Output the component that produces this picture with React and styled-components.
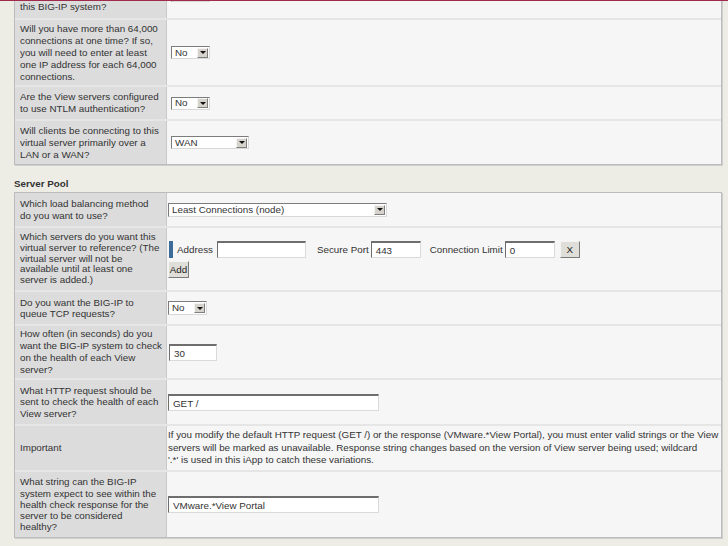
import React from 'react';
import styled, { createGlobalStyle } from 'styled-components';

const GlobalStyle = createGlobalStyle`
  html, body {
    margin: 0;
    padding: 0;
    background: #eeede5;
  }
  body {
    font-family: "Liberation Sans", Arial, sans-serif;
    font-size: 9.8px;
    color: #333;
  }
`;

const Page = styled.div`
  width: 728px;
  height: 546px;
  overflow: hidden;
  background: #eeede5;
`;

const TopRule = styled.div`
  height: 1px;
  background: #9e2a4c;
  position: relative;
  z-index: 2;
`;

const Clip = styled.div`
  overflow: hidden;
  padding: 0 4px 2px 14px;
`;

const Table = styled.div`
  width: 706px;
  margin-top: ${(p) => p.$shift || 0}px;
  border: 1px solid #bcbcbc;
  box-shadow: 1px 1px 0 #cfcfcf;
  background: #f6f6f6;
`;

const Row = styled.div`
  display: grid;
  grid-template-columns: 152px 1fr;
  min-height: ${(p) => p.$h}px;
  border-top: ${(p) => (p.$first ? 'none' : '2px solid #e6e6e6')};
  box-sizing: border-box;
`;

const Label = styled.div`
  background: #dcdcdc;
  border-right: 1px solid #c9c9c9;
  padding: 0 2px 0 5px;
  display: flex;
  align-items: center;
  white-space: nowrap;
  line-height: ${(p) => p.$lh || 12}px;
`;

const Value = styled.div`
  display: flex;
  flex-direction: column;
  justify-content: center;
  align-items: flex-start;
  padding-left: ${(p) => p.$pad ?? 1}px;
  padding-right: 2px;
`;

const Note = styled.div`
  line-height: 12.6px;
  white-space: nowrap;
`;

const Heading = styled.div`
  font-weight: bold;
  padding: 11px 0 3px 14px;
  line-height: 11px;
`;

const Select = styled.div`
  display: inline-flex;
  align-items: center;
  box-sizing: border-box;
  width: ${(p) => p.$w}px;
  height: ${(p) => p.$hgt || 14}px;
  background: #fff;
  border: 1px solid;
  border-color: #7c7c7c #d8d8d8 #d8d8d8 #7c7c7c;
  padding-left: 3px;
  padding-right: 1px;
  line-height: 1;
`;

const SelectText = styled.span`
  flex: 1;
`;

const Arrow = styled.span`
  width: 11px;
  height: 10px;
  box-sizing: border-box;
  background: #d6d3cc;
  border: 1px solid;
  border-color: #f4f4f4 #7e7e7e #7e7e7e #f4f4f4;
  display: flex;
  align-items: center;
  justify-content: center;
  &::after {
    content: '';
    border-left: 3px solid transparent;
    border-right: 3px solid transparent;
    border-top: 3px solid #111;
  }
`;

const Input = styled.div`
  box-sizing: border-box;
  width: ${(p) => p.$w}px;
  height: 17px;
  background: #fff;
  border: 1px solid;
  border-color: #6e6e6e #dadada #dadada #6e6e6e;
  border-top-width: 2px;
  padding: 3px 0 0 4px;
  line-height: 10px;
`;

const Button = styled.div`
  box-sizing: border-box;
  width: ${(p) => p.$w}px;
  height: 17px;
  margin-top: ${(p) => p.$top || 0}px;
  background: #e0ded8;
  border: 1px solid;
  border-color: #f4f4f4 #7a7a7a #7a7a7a #f4f4f4;
  display: flex;
  align-items: center;
  justify-content: center;
  color: #222;
`;

const MemberLine = styled.div`
  display: flex;
  align-items: center;
  height: 17px;
`;

const Marker = styled.span`
  width: 4px;
  height: 17px;
  background: #3d6c98;
  margin: 0 4px 0 1px;
`;

const Caption = styled.span`
  margin-right: ${(p) => p.$gap ?? 2}px;
`;

const Spacer = styled.span`
  width: ${(p) => p.$w}px;
`;

const Dropdown = ({ value, w, h }) => (
  <Select $w={w} $hgt={h}>
    <SelectText>{value}</SelectText>
    <Arrow />
  </Select>
);

const App = () => (
  <Page>
    <GlobalStyle />
    <TopRule />
    <Clip>
      <Table $shift={-30}>
        <Row $h={46} $first>
          <Label>
            <div>
              What IP address do you want to
              <br />
              use for the virtual server on
              <br />
              this BIG-IP system?
            </div>
          </Label>
          <Value $pad={4}>
            <Dropdown value="" w={39} h={13} />
          </Value>
        </Row>
        <Row $h={67}>
          <Label>
            <div>
              Will you have more than 64,000
              <br />
              connections at one time? If so,
              <br />
              you will need to enter at least
              <br />
              one IP address for each 64,000
              <br />
              connections.
            </div>
          </Label>
          <Value $pad={4}>
            <Dropdown value="No" w={39} h={13} />
          </Value>
        </Row>
        <Row $h={34}>
          <Label>
            <div>
              Are the View servers configured
              <br />
              to use NTLM authentication?
            </div>
          </Label>
          <Value $pad={4}>
            <Dropdown value="No" w={39} h={13} />
          </Value>
        </Row>
        <Row $h={45}>
          <Label>
            <div>
              Will clients be connecting to this
              <br />
              virtual server primarily over a
              <br />
              LAN or a WAN?
            </div>
          </Label>
          <Value $pad={4}>
            <Dropdown value="WAN" w={78} h={13} />
          </Value>
        </Row>
      </Table>
    </Clip>

    <Heading>Server Pool</Heading>
    <Clip>
      <Table>
        <Row $h={33} $first>
          <Label $lh={11.5}>
            <div>
              Which load balancing method
              <br />
              do you want to use?
            </div>
          </Label>
          <Value>
            <Dropdown value="Least Connections (node)" w={219} />
          </Value>
        </Row>
        <Row $h={64}>
          <Label $lh={10.8}>
            <div>
              Which servers do you want this
              <br />
              virtual server to reference? (The
              <br />
              virtual server will not be
              <br />
              available until at least one
              <br />
              server is added.)
            </div>
          </Label>
          <Value>
            <MemberLine>
              <Marker />
              <Caption $gap={4}>Address</Caption>
              <Input $w={89} />
              <Spacer $w={11} />
              <Caption>Secure Port</Caption>
              <Input $w={50}>443</Input>
              <Spacer $w={9} />
              <Caption>Connection Limit</Caption>
              <Input $w={50}>0</Input>
              <Spacer $w={5} />
              <Button $w={20}>X</Button>
            </MemberLine>
            <Button $w={21} $top={3}>Add</Button>
          </Value>
        </Row>
        <Row $h={34}>
          <Label $lh={11.5}>
            <div>
              Do you want the BIG-IP to
              <br />
              queue TCP requests?
            </div>
          </Label>
          <Value>
            <Dropdown value="No" w={39} />
          </Value>
        </Row>
        <Row $h={54}>
          <Label $lh={11.8}>
            <div>
              How often (in seconds) do you
              <br />
              want the BIG-IP system to check
              <br />
              on the health of each View
              <br />
              server?
            </div>
          </Label>
          <Value $pad={2}>
            <Input $w={48}>30</Input>
          </Value>
        </Row>
        <Row $h={46}>
          <Label $lh={11.5}>
            <div>
              What HTTP request should be
              <br />
              sent to check the health of each
              <br />
              View server?
            </div>
          </Label>
          <Value>
            <Input $w={211}>GET /</Input>
          </Value>
        </Row>
        <Row $h={46}>
          <Label>Important</Label>
          <Value>
            <Note>
              If you modify the default HTTP request (GET /) or the response
              (VMware.*View Portal), you must enter valid strings or the View
              <br />
              servers will be marked as unavailable. Response string changes
              based on the version of View server being used; wildcard
              <br />
              '.*' is used in this iApp to catch these variations.
            </Note>
          </Value>
        </Row>
        <Row $h={67}>
          <Label $lh={11.3}>
            <div>
              What string can the BIG-IP
              <br />
              system expect to see within the
              <br />
              health check response for the
              <br />
              server to be considered
              <br />
              healthy?
            </div>
          </Label>
          <Value>
            <Input $w={211}>VMware.*View Portal</Input>
          </Value>
        </Row>
      </Table>
    </Clip>
  </Page>
);

export default App;
